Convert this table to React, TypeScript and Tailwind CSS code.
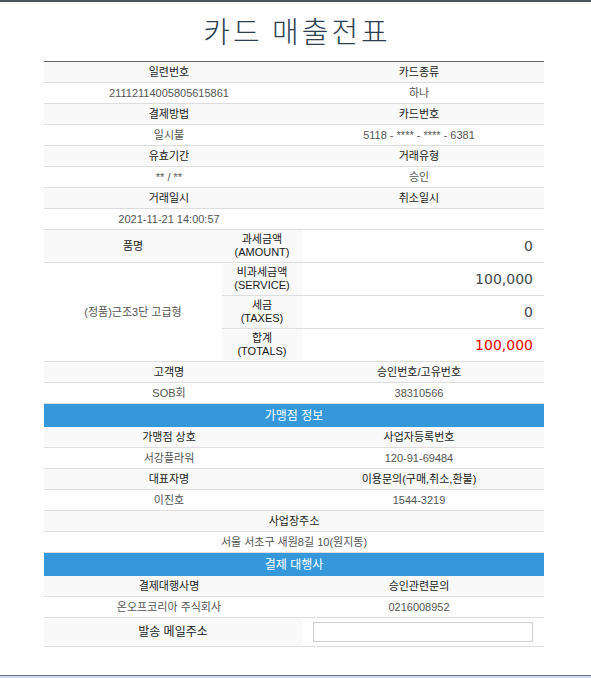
type Pair = { head: [string, string]; value: [string, string] };

const TOP_PAIRS: Pair[] = [
  { head: ["일련번호", "카드종류"], value: ["21112114005805615861", "하나"] },
  { head: ["결제방법", "카드번호"], value: ["일시불", "5118 - **** - **** - 6381"] },
  { head: ["유효기간", "거래유형"], value: ["** / **", "승인"] },
  { head: ["거래일시", "취소일시"], value: ["2021-11-21 14:00:57", ""] },
];

const AMOUNTS = [
  { label: "과세금액", en: "(AMOUNT)", amount: "0", red: false },
  { label: "비과세금액", en: "(SERVICE)", amount: "100,000", red: false },
  { label: "세금", en: "(TAXES)", amount: "0", red: false },
  { label: "합계", en: "(TOTALS)", amount: "100,000", red: true },
];

function Row({
  cells,
  head,
}: {
  cells: string[];
  head?: boolean;
}) {
  return (
    <div
      className={
        head
          ? "flex h-[21px] border-b border-[#dddddd] bg-[#f9f9f9] text-[#1a1a1a]"
          : "flex h-[21px] border-b border-[#dddddd] bg-white text-[#555555]"
      }
    >
      {cells.map((cell, i) => (
        <div key={i} className="flex flex-1 items-center justify-center whitespace-pre">
          {cell}
        </div>
      ))}
    </div>
  );
}

function SectionBar({ title }: { title: string }) {
  return (
    <div className="flex h-[23px] items-center justify-center bg-[#3498db] text-[12px] text-white">
      {title}
    </div>
  );
}

export default function App() {
  return (
    <div className="flex h-[678px] flex-col bg-white font-['Liberation_Sans','Noto_Sans_CJK_KR',sans-serif] text-[11px]">
      <div className="h-[2px] bg-[#4d535c]" />

      <div className="flex h-[59px] items-center justify-center pb-[3px]">
        <h1 className="pl-[3px] font-['Noto_Sans_CJK_KR',sans-serif] text-[29px] font-light leading-none tracking-[3px] text-[#2c3e50]">
          카드 매출전표
        </h1>
      </div>

      <div className="ml-[44px] w-[500px] border-t border-[#666666]">
        {TOP_PAIRS.map((pair) => (
          <div key={pair.head[0]}>
            <Row cells={pair.head} head />
            <Row cells={pair.value} />
          </div>
        ))}

        <div className="grid grid-cols-[178px_80px_242px] grid-rows-[33px_33px_33px_33px]">
          <div className="col-start-1 row-start-1 flex items-center justify-center border-b border-[#dddddd] bg-[#f9f9f9] text-[#1a1a1a]">
            품명
          </div>
          <div className="col-start-1 row-span-3 row-start-2 flex items-center justify-center border-b border-[#dddddd] bg-white text-[#555555]">
            (정품)근조3단 고급형
          </div>
          {AMOUNTS.map((item, i) => (
            <div key={item.label} className="contents">
              <div
                className="col-start-2 flex flex-col items-center justify-center border-b border-[#dddddd] bg-[#f9f9f9] leading-[13px] text-[#1a1a1a]"
                style={{ gridRowStart: i + 1 }}
              >
                <span>{item.label}</span>
                <span>{item.en}</span>
              </div>
              <div
                className={
                  item.red
                    ? "col-start-3 flex items-center justify-end border-b border-[#dddddd] bg-white pr-[11px] font-['DejaVu_Sans',sans-serif] text-[14px] text-[#e30000]"
                    : "col-start-3 flex items-center justify-end border-b border-[#dddddd] bg-white pr-[11px] font-['DejaVu_Sans',sans-serif] text-[14px] text-[#45474c]"
                }
                style={{ gridRowStart: i + 1 }}
              >
                {item.amount}
              </div>
            </div>
          ))}
        </div>

        <Row cells={["고객명", "승인번호/고유번호"]} head />
        <Row cells={["SOB회", "38310566"]} />

        <SectionBar title="가맹점 정보" />
        <Row cells={["가맹점 상호", "사업자등록번호"]} head />
        <Row cells={["서강플라워", "120-91-69484"]} />
        <Row cells={["대표자명", "이용문의(구매,취소,환불)"]} head />
        <Row cells={["이진호", "1544-3219"]} />
        <Row cells={["사업장주소"]} head />
        <Row cells={["서울 서초구 새원8길 10(원지동)"]} />

        <SectionBar title="결제 대행사" />
        <Row cells={["결제대행사명", "승인관련문의"]} head />
        <Row cells={["온오프코리아 주식회사", "0216008952"]} />

        <div className="grid h-[29px] grid-cols-[258px_242px] border-b border-[#dddddd]">
          <div className="flex items-center justify-center bg-[#f9f9f9] text-[12px] text-[#1a1a1a]">
            발송 메일주소
          </div>
          <div className="flex items-center bg-white pl-[11px]">
            <input
              type="text"
              className="h-[20px] w-[220px] border border-[#cccccc] bg-white px-1 text-[11px] outline-none"
            />
          </div>
        </div>
      </div>

      <div className="mt-auto h-[3px] border-t border-[#6b7785] bg-[#c9dbf0]" />
    </div>
  );
}
